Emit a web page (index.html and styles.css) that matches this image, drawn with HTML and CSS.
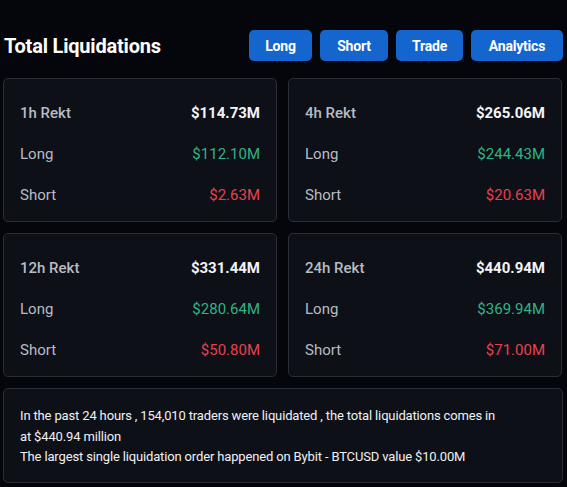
FILE: index.html
```html
<!DOCTYPE html>
<html>
<head>
<meta charset="utf-8">
<link rel="stylesheet" href="styles.css">
</head>
<body>
<div class="page">
  <header class="head">
    <h1 class="title">Total Liquidations</h1>
    <nav class="btns">
      <a class="btn b-long">Long</a>
      <a class="btn b-short">Short</a>
      <a class="btn b-trade">Trade</a>
      <a class="btn b-an">Analytics</a>
    </nav>
  </header>
  <section class="grid">
    <div class="card">
      <div class="row"><span class="lbl">1h Rekt</span><span class="tot">$114.73M</span></div>
      <div class="row"><span class="lbl">Long</span><span class="up">$112.10M</span></div>
      <div class="row"><span class="lbl">Short</span><span class="down">$2.63M</span></div>
    </div>
    <div class="card">
      <div class="row"><span class="lbl">4h Rekt</span><span class="tot">$265.06M</span></div>
      <div class="row"><span class="lbl">Long</span><span class="up">$244.43M</span></div>
      <div class="row"><span class="lbl">Short</span><span class="down">$20.63M</span></div>
    </div>
    <div class="card">
      <div class="row"><span class="lbl">12h Rekt</span><span class="tot">$331.44M</span></div>
      <div class="row"><span class="lbl">Long</span><span class="up">$280.64M</span></div>
      <div class="row"><span class="lbl">Short</span><span class="down">$50.80M</span></div>
    </div>
    <div class="card">
      <div class="row"><span class="lbl">24h Rekt</span><span class="tot">$440.94M</span></div>
      <div class="row"><span class="lbl">Long</span><span class="up">$369.94M</span></div>
      <div class="row"><span class="lbl">Short</span><span class="down">$71.00M</span></div>
    </div>
  </section>
  <section class="summary">
    <p>In the past 24 hours , 154,010 traders were liquidated , the total liquidations comes in at $440.94 million</p>
    <p>The largest single liquidation order happened on Bybit - BTCUSD value $10.00M</p>
  </section>
</div>
</body>
</html>
```
FILE: styles.css
```css
html, body {
  margin: 0;
  background: #05060b;
}
body {
  font-family: Roboto, "Liberation Sans", sans-serif;
  color: #eaecef;
}
.page {
  padding: 30px 4px 0 3px;
}
.head {
  display: flex;
  align-items: center;
  justify-content: space-between;
  height: 31px;
  margin-bottom: 17px;
}
.title {
  margin: 0 0 0 1px;
  font-size: 20px;
  font-weight: 700;
  color: #ffffff;
  letter-spacing: -0.2px;
}
.btns {
  display: flex;
  gap: 8px;
}
.btn {
  display: flex;
  align-items: center;
  justify-content: center;
  height: 31px;
  border-radius: 5px;
  background: #1565cf;
  color: #ffffff;
  font-size: 14px;
  font-weight: 700;
  letter-spacing: -0.2px;
}
.b-long { width: 63px; }
.b-short { width: 68px; }
.b-trade { width: 67px; }
.b-an { width: 92px; }
.grid {
  display: grid;
  grid-template-columns: 274px 274px;
  column-gap: 11px;
  row-gap: 11px;
}
.card {
  box-sizing: border-box;
  height: 144px;
  border: 1px solid #2a2e38;
  border-radius: 5px;
  background: #0e1018;
  padding: 13px 16px 0 16px;
  display: flex;
  flex-direction: column;
}
.row {
  display: flex;
  justify-content: space-between;
  align-items: center;
  height: 41px;
  font-size: 15px;
}
.lbl {
  color: #b7bcc5;
}
.row:first-child .lbl {
  font-weight: 500;
}
.tot {
  color: #f3f4f6;
  font-weight: 700;
}
.up {
  color: #2fb483;
}
.down {
  color: #e8414f;
}
.summary {
  box-sizing: border-box;
  margin-top: 11px;
  height: 95px;
  border: 1px solid #2a2e38;
  border-radius: 5px;
  background: #0e1018;
  padding: 17px 60px 0 16px;
  font-size: 13px;
  letter-spacing: -0.15px;
  line-height: 20.5px;
  color: #eef0f3;
}
.summary p {
  margin: 0;
}
```
